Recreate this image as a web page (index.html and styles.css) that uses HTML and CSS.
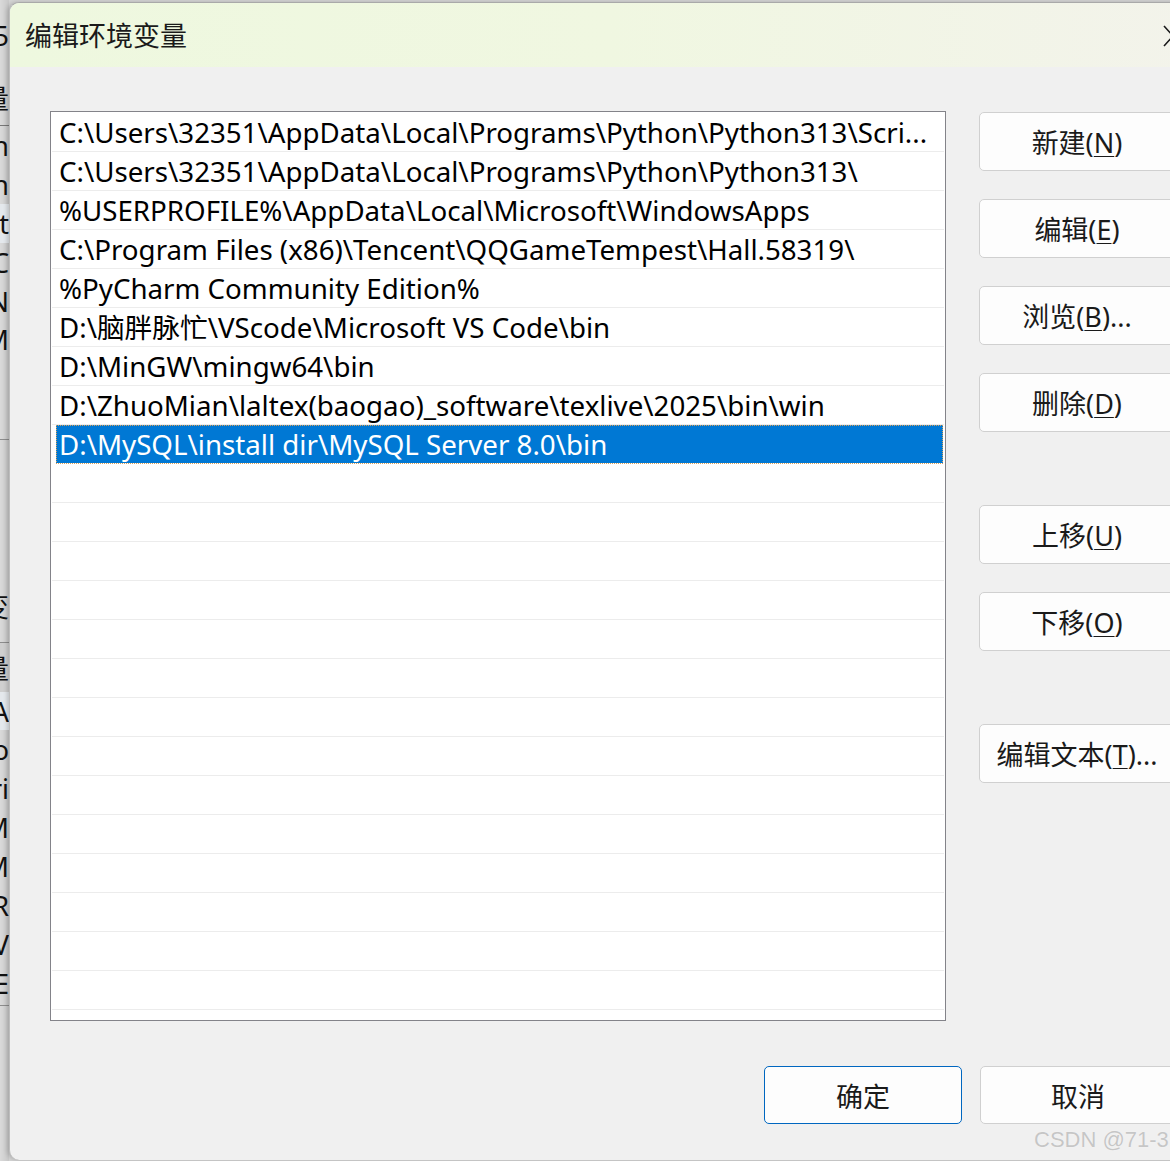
FILE: index.html
```html
<!DOCTYPE html>
<html lang="zh-CN">
<head>
    <meta charset="UTF-8">
    <title>编辑环境变量</title>
    <link rel="stylesheet" href="styles.css">
</head>
<body>
<div class="screen">
    <!-- 后面那个"环境变量"窗口露出来的一条边 -->
    <div class="behind">
        <div class="b-row" style="height:70px"><span>s5</span></div>
        <div class="b-row tab" style="height:56px"><span>变量</span></div>
        <div class="b-row" style="height:39px"><span>Path</span></div>
        <div class="b-row" style="height:39px"><span>Path</span></div>
        <div class="b-row hl" style="height:39px"><span>tt</span></div>
        <div class="b-row" style="height:39px"><span>TC</span></div>
        <div class="b-row" style="height:38px"><span>TN</span></div>
        <div class="b-row" style="height:39px"><span>TM</span></div>
        <div class="b-row line" style="height:81px"></div>
        <div class="b-row" style="height:146px"></div>
        <div class="b-row" style="height:38px"><span>量变</span></div>
        <div class="b-row line" style="height:19px"></div>
        <div class="b-row tab2" style="height:49px"><span>变量</span></div>
        <div class="b-row hl" style="height:38px"><span>LA</span></div>
        <div class="b-row" style="height:39px"><span>Co</span></div>
        <div class="b-row" style="height:39px"><span>Dri</span></div>
        <div class="b-row" style="height:39px"><span>NM</span></div>
        <div class="b-row" style="height:39px"><span>NM</span></div>
        <div class="b-row" style="height:39px"><span>TR</span></div>
        <div class="b-row" style="height:39px"><span>TV</span></div>
        <div class="b-row" style="height:39px"><span>TE</span></div>
        <div class="b-row line" style="height:3px"></div>
    </div>

    <div class="dialog">
        <div class="title-bar">
            <span class="title">编辑环境变量</span>
            <svg class="close" width="20" height="22" viewBox="0 0 20 22">
                <path d="M2 1 L20 21 M20 1 L2 21" stroke="#1a1a1a" stroke-width="1.6" fill="none"/>
            </svg>
        </div>

        <div class="main">
            <div class="list">
                <div class="row">C:\Users\32351\AppData\Local\Programs\Python\Python313\Scri...</div>
                <div class="row">C:\Users\32351\AppData\Local\Programs\Python\Python313\</div>
                <div class="row">%USERPROFILE%\AppData\Local\Microsoft\WindowsApps</div>
                <div class="row">C:\Program Files (x86)\Tencent\QQGameTempest\Hall.58319\</div>
                <div class="row">%PyCharm Community Edition%</div>
                <div class="row">D:\脑胖脉忙\VScode\Microsoft VS Code\bin</div>
                <div class="row">D:\MinGW\mingw64\bin</div>
                <div class="row">D:\ZhuoMian\laltex(baogao)_software\texlive\2025\bin\win</div>
                <div class="row selected">D:\MySQL\install dir\MySQL Server 8.0\bin</div>
                <div class="row"></div>
                <div class="row"></div>
                <div class="row"></div>
                <div class="row"></div>
                <div class="row"></div>
                <div class="row"></div>
                <div class="row"></div>
                <div class="row"></div>
                <div class="row"></div>
                <div class="row"></div>
                <div class="row"></div>
                <div class="row"></div>
                <div class="row"></div>
                <div class="row"></div>
            </div>

            <div class="side">
                <button class="btn">新建(<u>N</u>)</button>
                <button class="btn">编辑(<u>E</u>)</button>
                <button class="btn">浏览(<u>B</u>)...</button>
                <button class="btn">删除(<u>D</u>)</button>
                <button class="btn gap">上移(<u>U</u>)</button>
                <button class="btn">下移(<u>O</u>)</button>
                <button class="btn gap">编辑文本(<u>T</u>)...</button>
            </div>
        </div>

        <div class="footer">
            <button class="btn ok">确定</button>
            <button class="btn">取消</button>
        </div>
        <div class="mark">CSDN @71-3</div>
    </div>
</div>
</body>
</html>
```

FILE: styles.css
```css
*{
    margin: 0;
    padding: 0;
    box-sizing: border-box;
}
body{
    width: 1170px;
    height: 1161px;
    overflow: hidden;
    background: #d4d4d4;
    font-family: "Noto Sans", "Noto Sans CJK SC", sans-serif;
}
.screen{
    display: flex;
    height: 1161px;
}

/* 左侧被挡住的窗口 */
.behind{
    width: 9px;
    flex-shrink: 0;
    overflow: hidden;
    background: linear-gradient(to right, #dadada, #c8c8c8);
}
.b-row{
    display: flex;
    justify-content: flex-end;
    align-items: center;
    font-size: 27px;
    color: #111;
    white-space: nowrap;
}
.b-row.hl{
    background: #e4e8ec;
}
.b-row.tab{
    border-bottom: 1px solid #777;
}
.b-row.tab2{
    background: #cfcfcf;
}
.b-row.line{
    border-bottom: 1px solid #8c8c8c;
}

/* 对话框 */
.dialog{
    position: relative;
    width: 1200px;
    flex-shrink: 0;
    margin-top: 2px;
    height: 1158px;
    background: #f0f0f0;
    border-top: 1px solid #a9a9a9;
    border-left: 1px solid #bdbdbd;
    border-radius: 10px 0 0 10px;
    box-shadow: -2px 0 4px rgba(0,0,0,0.18);
    overflow: hidden;
}
.title-bar{
    height: 64px;
    display: flex;
    align-items: center;
    padding-left: 15px;
    background: linear-gradient(to right, #eef8df, #f0f7e1 50%, #f3f3eb);
}
.title{
    font-family: "Noto Sans CJK SC", sans-serif;
    font-size: 27px;
    color: #1a1a1a;
    margin-top: -2px;
}
.close{
    margin-left: auto;
    margin-right: 27px;
    margin-top: 2px;
}

.main{
    display: flex;
    gap: 33px;
    padding: 44px 0 0 40px;
}
.list{
    width: 896px;
    height: 910px;
    background: #fff;
    border: 1px solid #838389;
    padding: 1px 1px 0 1px;
    overflow: hidden;
}
.row{
    height: 39px;
    line-height: 38px;
    padding-left: 7px;
    font-size: 27.7px;
    color: #000;
    border-bottom: 1px solid #ececec;
    white-space: nowrap;
    overflow: hidden;
}
.row.selected{
    margin: 0 1px 0 4px;
    padding-left: 3px;
    color: #fff;
    background: #0078d4;
    outline: 1px dotted #d9a15a;
    outline-offset: -1px;
    border-bottom-color: #fff;
}

.side{
    display: flex;
    flex-direction: column;
    gap: 28px;
    padding-top: 1px;
}
.btn{
    width: 196px;
    height: 59px;
    flex-shrink: 0;
    background: #fdfdfd;
    border: 1px solid #d0d0d0;
    border-radius: 5px;
    font-family: "Noto Sans", "Noto Sans CJK SC", sans-serif;
    font-size: 27px;
    color: #1a1a1a;
}
.btn u{
    text-underline-offset: 3px;
    text-decoration-thickness: 1px;
}
.side .gap{
    margin-top: 45px;
}

.footer{
    display: flex;
    justify-content: flex-end;
    gap: 18px;
    width: 1166px;
    margin-top: 45px;
}
.footer .btn{
    height: 58px;
}
.footer .ok{
    width: 198px;
    border-color: #0067c0;
}

.mark{
    position: absolute;
    left: 1024px;
    top: 1124px;
    font-family: "Liberation Sans", sans-serif;
    font-size: 22px;
    color: #c6c6c6;
    text-shadow: 0 0 1px #fff;
}
```
